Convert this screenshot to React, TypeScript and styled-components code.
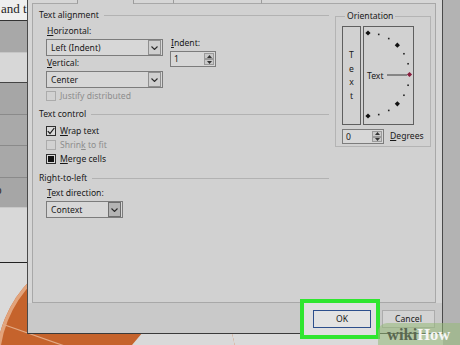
import React from "react";
import styled, { createGlobalStyle } from "styled-components";

const GlobalStyle = createGlobalStyle`
  *, *::before, *::after { box-sizing: border-box; }
  html, body { margin: 0; padding: 0; background: #dadada; }
  #root { width: 460px; height: 345px; }
`;

const Screen = styled.div`
  position: relative;
  width: 460px;
  height: 345px;
  overflow: hidden;
  font-family: "Noto Sans", "Open Sans", sans-serif;
  font-size: 8.6px;
  line-height: 12px;
  color: #181818;
`;

/* ---------- spreadsheet behind the dialog ---------- */
const Sheet = styled.div`
  display: flex;
  width: 460px;
  height: 345px;
`;
const SheetColumn = styled.div`
  width: 27px;
  display: flex;
  flex-direction: column;
  overflow: hidden;
  background: #dadada;
`;
const SheetRow = styled.div<{ $h: number; $bg: string; $line: string }>`
  flex: none;
  height: ${(p) => p.$h}px;
  background: ${(p) => p.$bg};
  border-bottom: 1px solid ${(p) => p.$line};
  display: flex;
  align-items: center;
  white-space: nowrap;
  overflow: hidden;
`;
const SheetText = styled.span`
  font-family: "Liberation Serif", serif;
  font-size: 13px;
  color: #1e1e1e;
  margin-top: -3px;
  padding-left: 1px;
`;
const SheetGlyph = styled.span`
  font-family: "Liberation Sans", sans-serif;
  font-size: 10px;
  color: #222;
  margin-left: -4px;
  margin-top: -4px;
`;
const SheetFill = styled.div`
  flex: 1;
  background: #dadada;
`;
const SheetMiddle = styled.div`
  flex: 1;
  background: #dadada;
`;
const SheetShade = styled.div`
  width: 17px;
  background: #b3b3b3;
`;
const PieCanvas = styled.svg`
  position: absolute;
  left: 0;
  top: 260px;
  width: 240px;
  height: 85px;
`;

/* ---------- dialog ---------- */
const Dialog = styled.div`
  position: absolute;
  left: 27px;
  top: 0;
  width: 416px;
  height: 334px;
  display: flex;
  flex-direction: column;
  background: #d6d6d6;
  border-left: 1px solid #4a4a4a;
  border-right: 1px solid #4a4a4a;
  border-bottom: 1px solid #3a3a3a;
`;
const DialogBody = styled.div`
  flex: 1;
  display: flex;
  flex-direction: column;
  padding: 0 6px 0 4px;
`;
const TabStrip = styled.div`
  height: 4px;
  display: flex;
  flex: none;
`;
const Tab = styled.div<{ $w?: number; $active?: boolean }>`
  ${(p) => (p.$w ? `width: ${p.$w}px; flex: none;` : "flex: 1;")}
  height: 4px;
  background: ${(p) => (p.$active ? "#d1d1d1" : "#d6d6d6")};
  border-right: ${(p) => (p.$w ? "1px solid #9c9c9c" : "none")};
  border-bottom: ${(p) => (p.$active ? "none" : "1px solid #a8a8a8")};
`;
const Panel = styled.div`
  flex: 1;
  display: flex;
  align-items: flex-start;
  gap: 6px;
  padding: 5px 0 0 6px;
  background: #d1d1d1;
  border: 1px solid #a8a8a8;
  border-top: none;
`;
const LeftColumn = styled.div`
  width: 290px;
  display: flex;
  flex-direction: column;
`;
const SectionHeader = styled.div<{ $gap: number }>`
  display: flex;
  align-items: center;
  height: 12px;
  margin-top: ${(p) => p.$gap}px;
  white-space: nowrap;
`;
const Rule = styled.span`
  flex: 1;
  height: 1px;
  margin-left: 5px;
  background: #b2b2b2;
`;
const SectionBody = styled.div`
  display: flex;
  flex-direction: column;
  padding-left: 7px;
`;
const AlignRow = styled.div`
  display: flex;
  gap: 7px;
`;
const FieldColumn = styled.div<{ $top?: number }>`
  display: flex;
  flex-direction: column;
  margin-top: ${(p) => p.$top ?? 0}px;
`;
const FieldLabel = styled.div<{ $gap: number }>`
  height: 12px;
  margin-top: ${(p) => p.$gap}px;
  padding-left: 1px;
  white-space: nowrap;
`;
const Key = styled.span`
  text-decoration: underline;
  text-underline-offset: 1px;
`;
const Select = styled.div<{ $w: number }>`
  width: ${(p) => p.$w}px;
  height: 17px;
  margin-top: 2px;
  display: flex;
  align-items: center;
  padding: 0 1px 0 4px;
  background: #d7d7d7;
  border: 1px solid #7c7c7c;
`;
const SelectValue = styled.span`
  flex: 1;
  white-space: nowrap;
`;
const SelectArrow = styled.span<{ $hot?: boolean }>`
  width: 13px;
  height: 15px;
  display: flex;
  align-items: center;
  justify-content: center;
  background: ${(p) => (p.$hot ? "#b4b4b4" : "#cfcfcf")};
  border: 1px solid ${(p) => (p.$hot ? "#6d6d6d" : "#8f8f8f")};
`;
const Spinner = styled.div<{ $w: number; $h: number }>`
  width: ${(p) => p.$w}px;
  height: ${(p) => p.$h}px;
  margin-top: 2px;
  display: flex;
  align-items: center;
  padding: 0 1px 0 3px;
  background: #d7d7d7;
  border: 1px solid #7c7c7c;
`;
const SpinButtons = styled.span`
  width: 10px;
  height: 100%;
  display: flex;
  flex-direction: column;
  padding: 1px 0;
`;
const SpinHalf = styled.span`
  flex: 1;
  display: flex;
  align-items: center;
  justify-content: center;
  background: #c9c9c9;
  border: 1px solid #9a9a9a;
`;
const CheckRow = styled.div<{ $gap: number; $h: number; $disabled?: boolean }>`
  display: flex;
  align-items: center;
  gap: 4px;
  height: ${(p) => p.$h}px;
  margin-top: ${(p) => p.$gap}px;
  color: ${(p) => (p.$disabled ? "#8d8d8d" : "#181818")};
  white-space: nowrap;
`;
const CheckBox = styled.span<{ $disabled?: boolean }>`
  width: 10px;
  height: 10px;
  flex: none;
  display: flex;
  align-items: center;
  justify-content: center;
  border: 1px solid ${(p) => (p.$disabled ? "#ababab" : "#2e2e2e")};
  background: ${(p) => (p.$disabled ? "transparent" : "#d9d9d9")};
`;
const MixedMark = styled.span`
  width: 6px;
  height: 6px;
  background: #111;
`;

/* orientation */
const OrientationGroup = styled.fieldset`
  width: 96px;
  margin: 1px 0 0 0;
  padding: 4px 0 2px 6px;
  border: 1px solid #b4b4b4;
  min-width: 0;
`;
const Legend = styled.legend`
  margin-left: 3px;
  padding: 0 2px;
  height: 12px;
  line-height: 12px;
`;
const OrientationRow = styled.div`
  display: flex;
  gap: 2px;
`;
const VerticalTextBox = styled.div`
  width: 19px;
  height: 99px;
  display: flex;
  align-items: center;
  justify-content: center;
  border: 1px solid #5f5f5f;
  padding-top: 2px;
`;
const StackedText = styled.span`
  writing-mode: vertical-lr;
  text-orientation: upright;
  letter-spacing: 1.7px;
  line-height: 12px;
`;
const DialBox = styled.div`
  width: 51px;
  height: 99px;
  border: 1px solid #5f5f5f;
`;
const DialSvg = styled.svg`
  display: block;
  width: 49px;
  height: 97px;
`;
const DegreesRow = styled.div`
  display: flex;
  align-items: center;
  gap: 6px;
  margin-top: 2px;
`;

/* footer */
const Footer = styled.div`
  height: 30px;
  flex: none;
  display: flex;
  justify-content: flex-end;
  align-items: flex-start;
  gap: 11px;
  padding: 7px 7px 0 0;
  background: #c9c9c9;
`;
const Highlight = styled.div`
  position: relative;
  z-index: 0;
  &::before {
    content: "";
    position: absolute;
    z-index: -1;
    top: -11px;
    left: -13px;
    right: -9px;
    bottom: -11px;
    border: 4px solid #2fe62f;
    background: #e0e0e0;
  }
`;
const Button = styled.div<{ $w: number; $default?: boolean }>`
  width: ${(p) => p.$w}px;
  height: 18px;
  display: flex;
  align-items: center;
  justify-content: center;
  background: ${(p) => (p.$default ? "#e3e3e3" : "#d3d3d3")};
  border: 1px solid ${(p) => (p.$default ? "#2d4f8c" : "#acacac")};
`;

/* watermark */
const Watermark = styled.div`
  position: absolute;
  right: 0;
  bottom: 0;
  width: 82px;
  height: 22px;
  padding: 2px 0 0 9px;
  border-top-left-radius: 9px;
  background: rgba(150, 186, 120, 0.55);
  font-family: "Liberation Serif", serif;
  font-weight: bold;
  font-size: 16.5px;
  line-height: 20px;
  white-space: nowrap;
`;
const WikiPart = styled.span`
  color: #5a6852;
`;
const HowPart = styled.span`
  color: #f6f6f6;
`;

const Chevron = () => (
  <svg width="7" height="4" viewBox="0 0 7 4">
    <polyline points="0.5,0.5 3.5,3.5 6.5,0.5" fill="none" stroke="#2a2a2a" strokeWidth="1.1" />
  </svg>
);
const TriUp = () => (
  <svg width="5" height="3" viewBox="0 0 5 3">
    <polygon points="0,3 2.5,0 5,3" fill="#333" />
  </svg>
);
const TriDown = () => (
  <svg width="5" height="3" viewBox="0 0 5 3">
    <polygon points="0,0 2.5,3 5,0" fill="#333" />
  </svg>
);
const Tick = () => (
  <svg width="8" height="8" viewBox="0 0 8 8">
    <polyline points="0.8,4.2 3,6.5 7.3,1" fill="none" stroke="#1a1a1a" strokeWidth="1.2" />
  </svg>
);

const SpinBox: React.FC<{ w: number; h: number; value: string }> = ({ w, h, value }) => (
  <Spinner $w={w} $h={h}>
    <SelectValue>{value}</SelectValue>
    <SpinButtons>
      <SpinHalf>
        <TriUp />
      </SpinHalf>
      <SpinHalf>
        <TriDown />
      </SpinHalf>
    </SpinButtons>
  </Spinner>
);

const Dial = () => {
  const cx = 4;
  const cy = 47.5;
  const r = 41.5;
  const angles = Array.from({ length: 13 }, (_, i) => 90 - i * 15);
  return (
    <DialSvg viewBox="0 0 49 97">
      <text x="3" y="52" fontFamily="Noto Sans, sans-serif" fontSize="8.6" fill="#181818">
        Text
      </text>
      <line x1="23" y1="48" x2="43" y2="48" stroke="#3a3a3a" strokeWidth="1" />
      {angles.map((a) => {
        const rad = (a * Math.PI) / 180;
        const x = cx + r * Math.cos(rad);
        const y = cy - r * Math.sin(rad);
        if (a % 45 === 0) {
          const s = 2.6;
          return (
            <polygon
              key={a}
              points={`${x},${y - s} ${x + s},${y} ${x},${y + s} ${x - s},${y}`}
              fill={a === 0 ? "#8a1f3f" : "#111"}
            />
          );
        }
        return <rect key={a} x={x - 0.8} y={y - 0.8} width="1.6" height="1.6" fill="#222" />;
      })}
    </DialSvg>
  );
};

export default function App() {
  return (
    <Screen>
      <GlobalStyle />
      <Sheet>
        <SheetColumn>
          <SheetRow $h={21} $bg="#efefef" $line="#333">
            <SheetText>and t</SheetText>
          </SheetRow>
          <SheetRow $h={32} $bg="#a8a8a8" $line="#c6c6c6" />
          <SheetRow $h={30} $bg="#d7d7d7" $line="#444" />
          <SheetRow $h={32} $bg="#a6a6a6" $line="#8a8a8a" />
          <SheetRow $h={31} $bg="#a9a9a9" $line="#8a8a8a" />
          <SheetRow $h={32} $bg="#a8a8a8" $line="#8a8a8a" />
          <SheetRow $h={30} $bg="#a6a6a6" $line="#c8c8c8">
            <SheetGlyph>o</SheetGlyph>
          </SheetRow>
          <SheetRow $h={55} $bg="#d8d8d8" $line="#222" />
          <SheetFill />
        </SheetColumn>
        <SheetMiddle />
        <SheetShade />
      </Sheet>

      <PieCanvas viewBox="0 260 240 85">
        <defs>
          <clipPath id="pieClip">
            <circle cx="116" cy="364" r="120" />
          </clipPath>
        </defs>
        <circle cx="116" cy="364" r="120" fill="#c5632c" />
        <g clipPath="url(#pieClip)">
          <circle cx="116" cy="364" r="120" fill="none" stroke="#e2a37b" strokeWidth="7" />
          <line x1="116" y1="364" x2="2" y2="324" stroke="#e2aa86" strokeWidth="1.2" />
          <polygon points="116,364 245,211 400,211 400,400 116,400" fill="#d9d9d9" />
        </g>
      </PieCanvas>

      <Dialog>
        <DialogBody>
          <TabStrip>
            <Tab $w={46} />
            <Tab $w={56} $active />
            <Tab $w={40} />
            <Tab $w={88} />
            <Tab />
          </TabStrip>
          <Panel>
            <LeftColumn>
              <SectionHeader $gap={0}>
                Text alignment
                <Rule />
              </SectionHeader>
              <SectionBody>
                <AlignRow>
                  <FieldColumn>
                    <FieldLabel $gap={4}>
                      <Key>H</Key>orizontal:
                    </FieldLabel>
                    <Select $w={117}>
                      <SelectValue>Left (Indent)</SelectValue>
                      <SelectArrow>
                        <Chevron />
                      </SelectArrow>
                    </Select>
                    <FieldLabel $gap={1}>
                      <Key>V</Key>ertical:
                    </FieldLabel>
                    <Select $w={117}>
                      <SelectValue>Center</SelectValue>
                      <SelectArrow>
                        <Chevron />
                      </SelectArrow>
                    </Select>
                    <CheckRow $gap={2} $h={12} $disabled>
                      <CheckBox $disabled />
                      Justify distributed
                    </CheckRow>
                  </FieldColumn>
                  <FieldColumn $top={16}>
                    <FieldLabel $gap={0}>
                      <Key>I</Key>ndent:
                    </FieldLabel>
                    <SpinBox w={46} h={16} value="1" />
                  </FieldColumn>
                </AlignRow>
              </SectionBody>

              <SectionHeader $gap={6}>
                Text control
                <Rule />
              </SectionHeader>
              <SectionBody>
                <CheckRow $gap={4} $h={14}>
                  <CheckBox>
                    <Tick />
                  </CheckBox>
                  <span>
                    <Key>W</Key>rap text
                  </span>
                </CheckRow>
                <CheckRow $gap={0} $h={14} $disabled>
                  <CheckBox $disabled />
                  <span>
                    Shrin<Key>k</Key> to fit
                  </span>
                </CheckRow>
                <CheckRow $gap={0} $h={14}>
                  <CheckBox>
                    <MixedMark />
                  </CheckBox>
                  <span>
                    <Key>M</Key>erge cells
                  </span>
                </CheckRow>
              </SectionBody>

              <SectionHeader $gap={6}>
                Right-to-left
                <Rule />
              </SectionHeader>
              <SectionBody>
                <FieldLabel $gap={3}>
                  <Key>T</Key>ext direction:
                </FieldLabel>
                <Select $w={77}>
                  <SelectValue>Context</SelectValue>
                  <SelectArrow $hot>
                    <Chevron />
                  </SelectArrow>
                </Select>
              </SectionBody>
            </LeftColumn>

            <OrientationGroup>
              <Legend>Orientation</Legend>
              <OrientationRow>
                <VerticalTextBox>
                  <StackedText>Text</StackedText>
                </VerticalTextBox>
                <DialBox>
                  <Dial />
                </DialBox>
              </OrientationRow>
              <DegreesRow>
                <SpinBox w={42} h={15} value="0" />
                <span>
                  <Key>D</Key>egrees
                </span>
              </DegreesRow>
            </OrientationGroup>
          </Panel>
        </DialogBody>
        <Footer>
          <Highlight>
            <Button $w={58} $default>
              OK
            </Button>
          </Highlight>
          <Button $w={53}>Cancel</Button>
        </Footer>
      </Dialog>

      <Watermark>
        <WikiPart>wiki</WikiPart>
        <HowPart>How</HowPart>
      </Watermark>
    </Screen>
  );
}
